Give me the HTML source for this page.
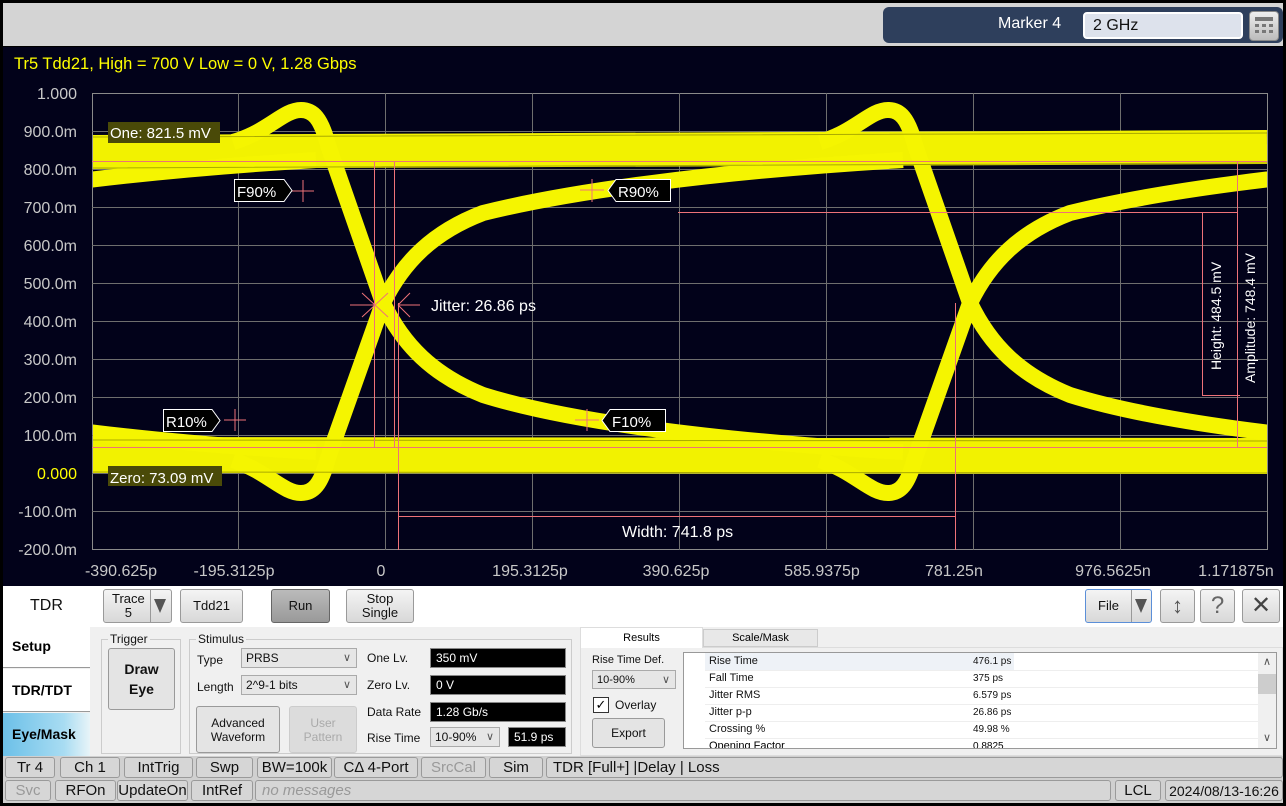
<!DOCTYPE html>
<html><head><meta charset="utf-8">
<style>
*{box-sizing:border-box;margin:0;padding:0}
body{width:1286px;height:806px;background:#000;position:relative;overflow:hidden;font-family:"Liberation Sans",sans-serif}
.a{position:absolute}
.btn{position:absolute;background:linear-gradient(#f4f4f4,#d8d8d8);border:1px solid #9a9a9a;border-radius:3px;font-size:13px;color:#111;text-align:center;line-height:14px;display:flex;align-items:center;justify-content:center;flex-direction:column}
.lbl{position:absolute;font-size:12px;color:#111}
.sel{position:absolute;background:#e6e6e6;border:1px solid #aaa;font-size:12px;padding-left:4px;line-height:18px;color:#111}
.sel:after{content:"\2228";position:absolute;right:5px;top:0;font-size:11px;color:#555}
.blk{position:absolute;background:#000;color:#fff;font-size:12px;padding-left:5px;line-height:19px;border:1px solid #888}
.st{position:absolute;height:21px;border:1px solid #9a9a9a;border-radius:3px;font-size:15px;color:#111;text-align:center;line-height:20px;background:#d6d6d6}
.row{position:absolute;left:709px;font-size:11px;color:#111}
.val{position:absolute;left:973px;font-size:10px;color:#111}
</style></head><body>
<div class="a" style="left:3px;top:3px;width:1280px;height:43px;background:#d4d4d4"></div>
<div class="a" style="left:883px;top:7px;width:400px;height:36px;background:#2e3f5c;border-radius:6px"></div>
<div class="a" style="left:998px;top:15px;font-size:16px;color:#fff">Marker 4</div>
<div class="a" style="left:1083px;top:12px;width:160px;height:27px;background:#dde2ec;border:2px solid #fff;border-radius:4px;font-size:16px;padding-left:8px;line-height:23px;color:#111">2 GHz</div>
<div class="a" style="left:1249px;top:11px;width:30px;height:30px;background:linear-gradient(#eee,#bbb);border-radius:4px;border:1px solid #888">
<svg class="a" style="left:0;top:0" width="28" height="28"><rect x="5" y="5" width="18" height="4" fill="#777"/><g fill="#777"><rect x="5" y="12" width="4" height="3"/><rect x="12" y="12" width="4" height="3"/><rect x="19" y="12" width="4" height="3"/><rect x="5" y="18" width="4" height="3"/><rect x="12" y="18" width="4" height="3"/><rect x="19" y="18" width="4" height="3"/></g></svg>
</div>

<svg class="a" style="left:0;top:0" width="1286" height="586" viewBox="0 0 1286 586">
<rect x="3" y="47" width="1280" height="539" fill="#02021a"/>
<text x="14" y="69" fill="#ffff00" font-size="16.5" font-family="Liberation Sans">Tr5 Tdd21, High = 700 V Low = 0 V, 1.28 Gbps</text>
<g stroke="#6e6e6e" stroke-width="1" fill="none">
<rect x="92.5" y="93.5" width="1175" height="456" stroke="#8a8a8a"/>
<path d="M238.5 93V550M385.5 93V550M532.5 93V550M679.5 93V550M826.5 93V550M973.5 93V550M1120.5 93V550"/>
<path d="M92 131.5H1267M92 169.5H1267M92 207.5H1267M92 245.5H1267M92 283.5H1267M92 321.5H1267M92 359.5H1267M92 397.5H1267M92 435.5H1267M92 473.5H1267M92 511.5H1267"/>
</g>
<g font-size="16" fill="#c8c8c8" text-anchor="end" font-family="Liberation Sans">
<text x="77" y="99">1.000</text><text x="77" y="137">900.0m</text><text x="77" y="175">800.0m</text><text x="77" y="213">700.0m</text><text x="77" y="251">600.0m</text><text x="77" y="289">500.0m</text><text x="77" y="327">400.0m</text><text x="77" y="365">300.0m</text><text x="77" y="403">200.0m</text><text x="77" y="441">100.0m</text><text x="77" y="479" fill="#ffff00">0.000</text><text x="77" y="517">-100.0m</text><text x="77" y="555">-200.0m</text>
</g>
<g font-size="16" fill="#c8c8c8" text-anchor="middle" font-family="Liberation Sans">
<text x="121" y="576">-390.625p</text><text x="234" y="576">-195.3125p</text><text x="381" y="576">0</text><text x="530" y="576">195.3125p</text><text x="676" y="576">390.625p</text><text x="822" y="576">585.9375p</text><text x="935" y="576" text-anchor="start" dx="-10">781.25n</text><text x="1113" y="576">976.5625n</text><text x="1236" y="576">1.171875n</text>
</g>
<defs><clipPath id="c"><rect x="93" y="94" width="1174" height="456"/></clipPath>
<g id="f"><path d="M-150 142 C-115 132 -100 110 -82 110 C-70 110 -62 118 -55 145 L0 303 C20 345 50 375 100 395 C180 420 320 440 520 452"/><path d="M-150 460 C-115 472 -100 493 -82 493 C-70 493 -62 485 -55 458 L0 303 C20 262 50 232 100 213 C180 193 320 172 520 160"/></g></defs>
<g clip-path="url(#c)" fill="none" stroke-linecap="butt">
<path d="M92 152 L1267 147" stroke="#f2f200" stroke-width="34"/>
<path d="M92 455 L1267 456" stroke="#f2f200" stroke-width="36"/>
<g stroke="#f5f500" stroke-width="16">
<use href="#f" transform="translate(-204 0)"/>
<use href="#f" transform="translate(383 0)"/>
<use href="#f" transform="translate(970 0)"/>
</g>
<g stroke="#8a8a00" stroke-width="1" opacity="0.7">
<path d="M92 137 L1267 133M92 168 L1267 163M92 440 L1267 441M92 472 L1267 473"/>
</g>
</g>
<g stroke="#ee7278" stroke-width="1" fill="none">
<path d="M92 161.5H1267M92 447.5H1267"/>
<path d="M374.5 162V447M394.5 162V447M398.5 303V550M398 516.5H955M955.5 303V550"/>
<path d="M678 212.5H1237M1202.5 212V395M1237.5 162V447M1202 395.5H1240"/>
<path d="M292 191H314M303 180V202M580 190H604M592 179V202M224 420H246M235 409V431M575 420H599M587 409V431"/>
<path d="M350 305H375M362 293L388 317M362 317L388 293M398 305H420M398 305L410 293M398 305L410 317"/>
</g>
<rect x="108" y="122" width="112" height="21" fill="#4a4a08"/>
<text x="110" y="138" fill="#fff" font-size="15" font-family="Liberation Sans">One: 821.5 mV</text>
<rect x="108" y="466" width="114" height="20" fill="#4a4a08"/>
<text x="110" y="483" fill="#fff" font-size="15" font-family="Liberation Sans">Zero: 73.09 mV</text>
<g stroke="#fff" stroke-width="1" fill="#000">
<path d="M234.5 179.5H284L292 190.5L284 201.5H234.5Z"/>
<path d="M670.5 179.5H616L608 190.5L616 201.5H670.5Z"/>
<path d="M163.5 409.5H212L220 420.5L212 431.5H163.5Z"/>
<path d="M665.5 409.5H610L602 420.5L610 431.5H665.5Z"/>
</g>
<g fill="#fff" font-size="15" font-family="Liberation Sans">
<text x="237" y="197">F90%</text><text x="618" y="197">R90%</text><text x="166" y="427">R10%</text><text x="612" y="427">F10%</text>
<text x="431" y="311" font-size="16">Jitter: 26.86 ps</text>
<text x="622" y="537" font-size="16">Width: 741.8 ps</text>
<text transform="translate(1221 370) rotate(-90)" font-size="14">Height: 484.5 mV</text>
<text transform="translate(1255 383) rotate(-90)" font-size="14">Amplitude: 748.4 mV</text>
</g>
</svg>

<div class="a" style="left:3px;top:586px;width:1280px;height:170px;background:#f0f0f0"></div>
<div class="a" style="left:3px;top:586px;width:1280px;height:41px;background:#fff"></div>
<div class="a" style="left:30px;top:597px;font-size:16px;color:#111">TDR</div>
<div class="btn" style="left:103px;top:589px;width:69px;height:34px;align-items:flex-start;padding-left:8px">Trace<br>5</div>
<div class="a" style="left:150px;top:590px;width:1px;height:32px;background:#999"></div>
<div class="a" style="left:154px;top:599px;width:0;height:0;border-left:6px solid transparent;border-right:6px solid transparent;border-top:14px solid #555"></div>
<div class="btn" style="left:180px;top:589px;width:63px;height:34px">Tdd21</div>
<div class="btn" style="left:271px;top:589px;width:59px;height:34px;background:linear-gradient(#bbb,#999);border-color:#666">Run</div>
<div class="btn" style="left:346px;top:589px;width:68px;height:34px">Stop<br>Single</div>
<div class="btn" style="left:1085px;top:589px;width:67px;height:34px;border-color:#5b8fd8;align-items:flex-start;padding-left:12px">File</div>
<div class="a" style="left:1131px;top:590px;width:1px;height:32px;background:#999"></div>
<div class="a" style="left:1135px;top:599px;width:0;height:0;border-left:6px solid transparent;border-right:6px solid transparent;border-top:14px solid #555"></div>
<div class="btn" style="left:1160px;top:589px;width:35px;height:34px;font-size:22px;color:#555">&#x2195;</div>
<div class="btn" style="left:1200px;top:589px;width:35px;height:34px;font-size:24px;color:#666">?</div>
<div class="btn" style="left:1242px;top:589px;width:38px;height:34px;font-size:24px;color:#444">&#x2715;</div>

<div class="a" style="left:3px;top:627px;width:87px;height:41px;background:#fff;border-bottom:1px solid #999;font-weight:bold;font-size:14px;padding:11px 0 0 9px">Setup</div>
<div class="a" style="left:3px;top:669px;width:87px;height:43px;background:#fff;border-bottom:1px solid #999;font-weight:bold;font-size:14px;padding:13px 0 0 9px">TDR/TDT</div>
<div class="a" style="left:3px;top:713px;width:87px;height:43px;background:linear-gradient(90deg,#6cc0e8,#a8dcf2 70%,#e8f4f8);font-weight:bold;font-size:14px;padding:13px 0 0 9px">Eye/Mask</div>

<div class="a" style="left:101px;top:639px;width:80px;height:115px;border:1px solid #ccc"></div>
<div class="lbl" style="left:108px;top:632px;background:#f0f0f0;padding:0 2px">Trigger</div>
<div class="btn" style="left:108px;top:648px;width:67px;height:62px;font-weight:bold;font-size:14px;line-height:20px;background:#e4e4e4">Draw<br>Eye</div>
<div class="a" style="left:189px;top:639px;width:383px;height:115px;border:1px solid #ccc"></div>
<div class="lbl" style="left:196px;top:632px;background:#f0f0f0;padding:0 2px">Stimulus</div>
<div class="lbl" style="left:197px;top:653px">Type</div>
<div class="sel" style="left:241px;top:648px;width:116px;height:20px">PRBS</div>
<div class="lbl" style="left:197px;top:680px">Length</div>
<div class="sel" style="left:241px;top:675px;width:116px;height:20px">2^9-1 bits</div>
<div class="btn" style="left:196px;top:706px;width:84px;height:47px;background:#e4e4e4;font-size:12px">Advanced<br>Waveform</div>
<div class="btn" style="left:289px;top:706px;width:68px;height:47px;background:#dcdcdc;color:#aaa;border-color:#ccc;font-size:12px">User<br>Pattern</div>
<div class="lbl" style="left:367px;top:651px">One Lv.</div>
<div class="blk" style="left:430px;top:648px;width:136px;height:20px">350 mV</div>
<div class="lbl" style="left:367px;top:678px">Zero Lv.</div>
<div class="blk" style="left:430px;top:675px;width:136px;height:20px">0 V</div>
<div class="lbl" style="left:367px;top:705px">Data Rate</div>
<div class="blk" style="left:430px;top:702px;width:136px;height:20px">1.28 Gb/s</div>
<div class="lbl" style="left:367px;top:731px">Rise Time</div>
<div class="sel" style="left:430px;top:727px;width:70px;height:20px">10-90%</div>
<div class="blk" style="left:508px;top:727px;width:58px;height:20px">51.9 ps</div>

<div class="a" style="left:580px;top:647px;width:703px;height:109px;background:#f0f0f0;border:1px solid #ddd"></div>
<div class="a" style="left:580px;top:627px;width:123px;height:21px;background:#fff;border:1px solid #ddd;border-bottom:none;font-size:11px;text-align:center;line-height:20px">Results</div>
<div class="a" style="left:703px;top:629px;width:115px;height:18px;background:#e8e8e8;border:1px solid #ccc;font-size:11px;text-align:center;line-height:17px">Scale/Mask</div>
<div class="lbl" style="left:592px;top:654px;font-size:11px">Rise Time Def.</div>
<div class="sel" style="left:592px;top:670px;width:84px;height:19px;font-size:11px">10-90%</div>
<div class="a" style="left:593px;top:697px;width:16px;height:16px;border:1px solid #333;background:#fff;font-size:13px;line-height:14px;text-align:center">&#x2713;</div>
<div class="lbl" style="left:615px;top:698px">Overlay</div>
<div class="btn" style="left:592px;top:718px;width:73px;height:30px;background:#e4e4e4;font-size:12px">Export</div>
<div class="a" style="left:683px;top:652px;width:594px;height:97px;background:#fff;border:1px solid #999;overflow:hidden">
<div class="a" style="left:21px;top:0;width:309px;height:17px;background:#eef2f7"></div>
<div class="a" style="left:21px;top:17px;width:553px;height:1px;background:#eee"></div>
<div class="a" style="left:21px;top:34px;width:553px;height:1px;background:#eee"></div>
<div class="a" style="left:21px;top:51px;width:553px;height:1px;background:#eee"></div>
<div class="a" style="left:21px;top:68px;width:553px;height:1px;background:#eee"></div>
<div class="a" style="left:21px;top:85px;width:553px;height:1px;background:#eee"></div>
<div class="a" style="left:574px;top:0;width:20px;height:97px;background:#f0f0f0"></div>
<div class="a" style="left:574px;top:21px;width:20px;height:20px;background:#cdcdcd"></div>
<div class="a" style="left:579px;top:2px;font-size:11px;color:#555">&#x2227;</div>
<div class="a" style="left:579px;top:78px;font-size:11px;color:#555">&#x2228;</div>
</div>
<div class="row" style="top:655px">Rise Time</div><div class="val" style="top:656px">476.1 ps</div>
<div class="row" style="top:672px">Fall Time</div><div class="val" style="top:673px">375 ps</div>
<div class="row" style="top:689px">Jitter RMS</div><div class="val" style="top:690px">6.579 ps</div>
<div class="row" style="top:706px">Jitter p-p</div><div class="val" style="top:707px">26.86 ps</div>
<div class="row" style="top:723px">Crossing %</div><div class="val" style="top:724px">49.98 %</div>
<div class="a" style="left:684px;top:740px;width:574px;height:8px;overflow:hidden"><div class="a" style="left:25px;top:0;font-size:11px">Opening Factor</div><div class="a" style="left:289px;top:1px;font-size:10px">0.8825</div></div>

<div class="a" style="left:3px;top:756px;width:1280px;height:47px;background:#d0d0d0"></div>
<div class="st" style="left:5px;top:757px;width:50px">Tr 4</div>
<div class="st" style="left:60px;top:757px;width:60px">Ch 1</div>
<div class="st" style="left:124px;top:757px;width:69px">IntTrig</div>
<div class="st" style="left:196px;top:757px;width:57px">Swp</div>
<div class="st" style="left:257px;top:757px;width:75px">BW=100k</div>
<div class="st" style="left:334px;top:757px;width:84px">C&#916; 4-Port</div>
<div class="st" style="left:421px;top:757px;width:65px;color:#999">SrcCal</div>
<div class="st" style="left:489px;top:757px;width:54px">Sim</div>
<div class="st" style="left:546px;top:757px;width:737px;text-align:left;padding-left:6px">TDR [Full+] |Delay | Loss</div>
<div class="st" style="left:5px;top:780px;width:46px;color:#999">Svc</div>
<div class="st" style="left:55px;top:780px;width:61px">RFOn</div>
<div class="st" style="left:117px;top:780px;width:71px">UpdateOn</div>
<div class="st" style="left:191px;top:780px;width:62px">IntRef</div>
<div class="st" style="left:255px;top:780px;width:856px;text-align:left;padding-left:6px;color:#999;font-style:italic">no messages</div>
<div class="st" style="left:1115px;top:780px;width:46px">LCL</div>
<div class="st" style="left:1165px;top:780px;width:118px;font-size:14px">2024/08/13-16:26</div>
</body></html>
